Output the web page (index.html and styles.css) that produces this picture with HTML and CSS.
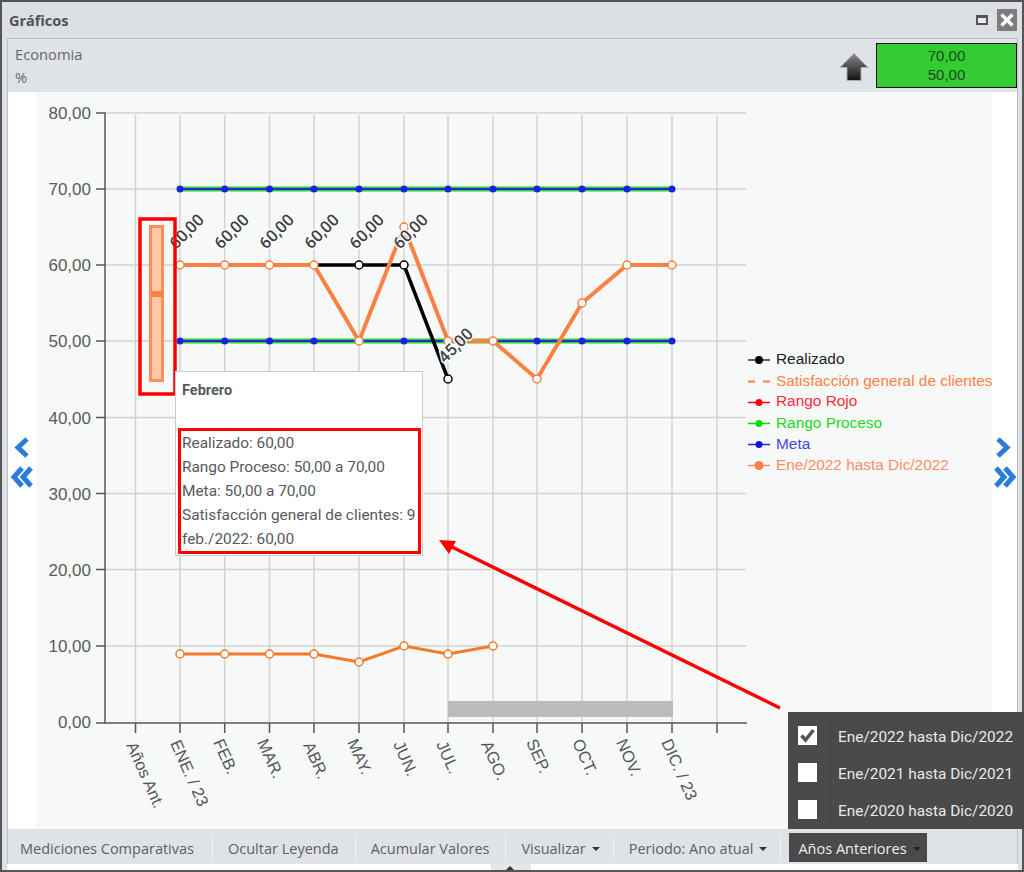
FILE: index.html
```html
<!DOCTYPE html>
<html lang="es">
<head>
<meta charset="utf-8">
<title>Gráficos</title>
<link rel="stylesheet" href="styles.css">
</head>
<body>
<div class="window">
  <header class="titlebar">
    <h1 class="title">Gráficos</h1>
    <div class="win-controls">
      <span class="restore"></span>
      <span class="close"><svg width="20" height="22" viewBox="0 0 20 22"><path d="M4.500 5.500 15.500 16.500M15.500 5.500 4.500 16.500" stroke="#fff" stroke-width="3.400" fill="none"/></svg></span>
    </div>
  </header>
  <section class="panel">
    <div class="panel-head">
      <div class="indicator"><div>Economia</div><div>%</div></div>
      <div class="status">
        <svg class="up-arrow" width="30" height="30" viewBox="0 0 30 30">
          <defs><linearGradient id="ua" x1="0" y1="0" x2="0" y2="1"><stop offset="0" stop-color="#8a8a8a"/><stop offset="1" stop-color="#111"/></linearGradient></defs>
          <path d="M15 1.500 29 15.500H22V28.500H8V15.500H1Z" fill="url(#ua)" stroke="#aaa" stroke-width="1"/>
        </svg>
        <div class="range"><div>70,00</div><div>50,00</div></div>
      </div>
    </div>
    <div class="chart-area">
      <div class="nav nav-left">
        <svg width="28" height="60" viewBox="0 0 28 60">
          <path class="chev" d="M19 6 10 14.500 19 23"/>
          <path class="chev" d="M14 35 6 44 14 53M23 35 15 44 23 53"/>
        </svg>
      </div>
      <div class="plot">
        <svg class="chart" width="956" height="737" viewBox="36 92 956 737">
          <g class="grid">
            <path d="M105 113H746M105 189H746M105 265H746M105 341H746M105 417.500H746M105 493.500H746M105 569.500H746M105 646H746"/>
            <path d="M135.500 115V722M180 115V722M224.700 115V722M269.500 115V722M314 115V722M359 115V722M404 115V722M448 115V722M493 115V722M537 115V722M582 115V722M627 115V722M672 115V722M717 115V722"/>
          </g>
          <g class="axis">
            <path d="M96 113H105V723H747M96 189H105M96 265H105M96 341H105M96 417.500H105M96 493.500H105M96 569.500H105M96 646H105M96 723H105"/>
            <path d="M135.500 723V733M180 723V733M224.700 723V733M269.500 723V733M314 723V733M359 723V733M404 723V733M448 723V733M493 723V733M537 723V733M582 723V733M627 723V733M672 723V733M717 723V733"/>
          </g>
          <g class="ylabels">
            <text x="91" y="119">80,00</text><text x="91" y="195">70,00</text><text x="91" y="271">60,00</text><text x="91" y="347">50,00</text><text x="91" y="424">40,00</text><text x="91" y="500">30,00</text><text x="91" y="576">20,00</text><text x="91" y="652">10,00</text><text x="91" y="728">0,00</text>
          </g>
          <g class="xlabels">
            <text transform="translate(126 745) rotate(66)">Años Ant.</text>
            <text transform="translate(170 743) rotate(66)">ENE. / 23</text>
            <text transform="translate(213 742) rotate(66)">FEB.</text>
            <text transform="translate(257 742) rotate(66)">MAR.</text>
            <text transform="translate(303 745) rotate(66)">ABR.</text>
            <text transform="translate(347 742) rotate(66)">MAY.</text>
            <text transform="translate(393 744) rotate(66)">JUN.</text>
            <text transform="translate(436 744) rotate(66)">JUL.</text>
            <text transform="translate(481 744) rotate(66)">AGO.</text>
            <text transform="translate(526 742) rotate(66)">SEP.</text>
            <text transform="translate(572 742) rotate(66)">OCT.</text>
            <text transform="translate(616 742) rotate(66)">NOV.</text>
            <text transform="translate(661 742) rotate(66)">DIC. / 23</text>
          </g>
          <rect class="gray-bar" x="448" y="701" width="225" height="16"/>
          <path class="band" d="M180 189H672M180 341H672"/>
          <path class="meta" d="M180 189H672M180 341H672"/>
          <g class="meta-dots">
            <circle cx="180" cy="189" r="3.500"/><circle cx="224.700" cy="189" r="3.500"/><circle cx="269.500" cy="189" r="3.500"/><circle cx="314" cy="189" r="3.500"/><circle cx="359" cy="189" r="3.500"/><circle cx="404" cy="189" r="3.500"/><circle cx="448" cy="189" r="3.500"/><circle cx="493" cy="189" r="3.500"/><circle cx="537" cy="189" r="3.500"/><circle cx="582" cy="189" r="3.500"/><circle cx="627" cy="189" r="3.500"/><circle cx="672" cy="189" r="3.500"/>
            <circle cx="180" cy="341" r="3.500"/><circle cx="224.700" cy="341" r="3.500"/><circle cx="269.500" cy="341" r="3.500"/><circle cx="314" cy="341" r="3.500"/><circle cx="359" cy="341" r="3.500"/><circle cx="404" cy="341" r="3.500"/><circle cx="448" cy="341" r="3.500"/><circle cx="493" cy="341" r="3.500"/><circle cx="537" cy="341" r="3.500"/><circle cx="582" cy="341" r="3.500"/><circle cx="627" cy="341" r="3.500"/><circle cx="672" cy="341" r="3.500"/>
          </g>
          <polyline class="real" points="180,265 224.700,265 269.500,265 314,265 359,265 404,265 448,379"/>
          <g class="real-dots">
            <circle cx="359" cy="265" r="4"/><circle cx="404" cy="265" r="4"/><circle cx="448" cy="379" r="4"/>
          </g>
          <polyline class="prev" points="180,265 224.700,265 269.500,265 314,265 359,341 404,227 448,341 493,341 537,379 582,303 627,265 672,265"/>
          <g class="prev-dots">
            <circle cx="180" cy="265" r="4"/><circle cx="224.700" cy="265" r="4"/><circle cx="269.500" cy="265" r="4"/><circle cx="314" cy="265" r="4"/><circle cx="359" cy="341" r="4"/><circle cx="404" cy="227" r="4"/><circle cx="448" cy="341" r="4"/><circle cx="493" cy="341" r="4"/><circle cx="537" cy="379" r="4"/><circle cx="582" cy="303" r="4"/><circle cx="627" cy="265" r="4"/><circle cx="672" cy="265" r="4"/>
          </g>
          <polyline class="sat" points="180,654 224.700,654 269.500,654 314,654 359,662 404,646 448,654 493,646"/>
          <g class="sat-dots">
            <circle cx="180" cy="654" r="4"/><circle cx="224.700" cy="654" r="4"/><circle cx="269.500" cy="654" r="4"/><circle cx="314" cy="654" r="4"/><circle cx="359" cy="662" r="4"/><circle cx="404" cy="646" r="4"/><circle cx="448" cy="654" r="4"/><circle cx="493" cy="646" r="4"/>
          </g>
          <g class="vlabels">
            <text transform="translate(176 250) rotate(-45)">60,00</text>
            <text transform="translate(221 250) rotate(-45)">60,00</text>
            <text transform="translate(266 250) rotate(-45)">60,00</text>
            <text transform="translate(311 250) rotate(-45)">60,00</text>
            <text transform="translate(356 250) rotate(-45)">60,00</text>
            <text transform="translate(400 250) rotate(-45)">60,00</text>
            <text transform="translate(445 364) rotate(-45)">45,00</text>
          </g>
          <g class="box">
            <rect class="box-outer" x="150.500" y="226.500" width="12" height="154"/>
            <rect class="box-median" x="151" y="291" width="12" height="6"/>
          </g>
          <rect class="mark" x="140" y="219" width="35" height="175"/>
          <path class="arrow-line" d="M780 708 452 547"/>
          <path class="arrow-head" d="M439 540 456 541 449 554Z"/>
          <g class="legend">
            <path class="l1" d="M748 360H770"/><circle class="d1" cx="759" cy="360" r="4"/>
            <path class="l2" d="M748 381.500H755M763 381.500H770"/>
            <path class="l3" d="M748 402.500H770"/><circle class="d3" cx="759" cy="402.500" r="3.500"/>
            <path class="l4" d="M748 423.500H770"/><circle class="d4" cx="759" cy="423.500" r="3.500"/>
            <path class="l5" d="M748 444.500H770"/><circle class="d5" cx="759" cy="444.500" r="3.500"/>
            <path class="l6" d="M748 465.500H770"/><circle class="d6" cx="759" cy="465.500" r="4.500"/>
            <text class="t1" x="776" y="364">Realizado</text>
            <text class="t2" x="776" y="386">Satisfacción general de clientes</text>
            <text class="t3" x="776" y="406">Rango Rojo</text>
            <text class="t4" x="776" y="428">Rango Proceso</text>
            <text class="t5" x="776" y="449">Meta</text>
            <text class="t6" x="776" y="470">Ene/2022 hasta Dic/2022</text>
          </g>
        </svg>
        <div class="tooltip">
          <div class="tip-title">Febrero</div>
          <div class="tip-body">
            <div>Realizado: 60,00</div>
            <div>Rango Proceso: 50,00 a 70,00</div>
            <div>Meta: 50,00 a 70,00</div>
            <div>Satisfacción general de clientes: 9</div>
            <div>feb./2022: 60,00</div>
          </div>
        </div>
      </div>
      <div class="nav nav-right">
        <svg width="24" height="60" viewBox="0 0 24 60">
          <path class="chev" d="M6 6 15 14.500 6 23"/>
          <path class="chev" d="M4 35 12 44 4 53M13 35 21 44 13 53"/>
        </svg>
      </div>
    </div>
    <nav class="toolbar">
      <span class="tool">Mediciones Comparativas</span>
      <span class="tool">Ocultar Leyenda</span>
      <span class="tool">Acumular Valores</span>
      <span class="tool caret">Visualizar</span>
      <span class="tool caret">Periodo: Ano atual</span>
      <span class="tool caret active">Años Anteriores</span>
    </nav>
  </section>
  <div class="footer"><span class="grip"></span></div>
  <div class="menu">
    <div class="menu-row">
      <span class="checkbox"><svg width="19" height="19" viewBox="0 0 19 19"><path d="M3.500 9.500 7.500 14 15.500 4" stroke="#555" stroke-width="3.500" fill="none"/></svg></span>
      <span class="menu-label">Ene/2022 hasta Dic/2022</span>
    </div>
    <div class="menu-row"><span class="checkbox"></span><span class="menu-label">Ene/2021 hasta Dic/2021</span></div>
    <div class="menu-row"><span class="checkbox"></span><span class="menu-label">Ene/2020 hasta Dic/2020</span></div>
  </div>
</div>
</body>
</html>
```
FILE: styles.css
```css
* { box-sizing: border-box; }
html, body { margin: 0; padding: 0; }
body { width: 1024px; height: 872px; overflow: hidden; background: #fff; }

.window {
  position: relative;
  width: 1024px;
  height: 872px;
  display: flex;
  flex-direction: column;
  background: #dcdfe4;
  border: 2px solid #555;
  padding: 0 4px 0 5px;
  font-family: "Open Sans", sans-serif;
}
.titlebar {
  height: 36px;
  flex: none;
  display: flex;
  align-items: center;
  justify-content: space-between;
  padding: 0 1px 0 2px;
}
.title { margin: 0; font-size: 14.500px; font-weight: 700; color: #50525a; }
.win-controls { display: flex; align-items: center; gap: 9px; }
.restore { width: 12px; height: 10px; border: 2px solid #555; border-top-width: 3px; background: #e8eaee; }
.close { width: 20px; height: 22px; background: #7d7d7d; display: block; }
.close svg { display: block; }

.panel {
  height: 826px;
  flex: none;
  display: flex;
  flex-direction: column;
  border-left: 1px solid #bcc0c8;
  border-top: 1px solid #bcc0c8;
  border-right: 1px solid #bcc0c8;
  background: #fff;
}
.panel-head {
  height: 53px;
  flex: none;
  display: flex;
  justify-content: space-between;
  background: #dfe2e6;
  padding: 4px 0 0 7px;
}
.indicator { font-size: 14.700px; line-height: 23px; color: #66686e; }
.status { display: flex; gap: 7px; }
.up-arrow { margin-top: 9px; }
.range {
  width: 141px;
  height: 45px;
  background: #33cc33;
  border: 1px solid #111;
  text-align: center;
  font-family: "Liberation Sans", sans-serif;
  font-size: 15px;
  line-height: 19px;
  color: #1c4a1c;
  padding-top: 2px;
}

.chart-area { height: 737px; flex: none; display: flex; background: #fff; }
.nav { flex: none; position: relative; }
.nav svg { position: absolute; top: 341px; left: 0; }
.nav-left { width: 28px; }
.nav-right { width: 24px; }
.chev { fill: none; stroke: #2a7bdc; stroke-width: 5; }
.plot { position: relative; width: 956px; height: 737px; background: #f7f9f9; flex: none; }
.chart { display: block; }

.grid path { fill: none; stroke: #d2d2d2; stroke-width: 1.500; }
.axis path { fill: none; stroke: #555; stroke-width: 1.500; }
.ylabels text { font: 17px "Liberation Sans", sans-serif; fill: #5a5a5a; text-anchor: end; }
.xlabels text { font: 16.500px "Liberation Sans", sans-serif; fill: #555; }
.gray-bar { fill: #bcbcbc; }
.band { fill: none; stroke: #2fce2f; stroke-width: 5; }
.meta { fill: none; stroke: #1f2fd8; stroke-width: 2; }
.meta-dots circle { fill: #1a22e0; }
.real { fill: none; stroke: #000; stroke-width: 3.500; }
.real-dots circle { fill: #fff; stroke: #000; stroke-width: 1.500; }
.prev { fill: none; stroke: #ff8040; stroke-width: 4; }
.prev-dots circle { fill: #fff; stroke: #f58140; stroke-width: 1.500; }
.sat { fill: none; stroke: #f47a2a; stroke-width: 3; }
.sat-dots circle { fill: #fff; stroke: #f47a2a; stroke-width: 1.500; }
.vlabels text {
  font: 500 16.500px "Roboto", sans-serif;
  fill: #3f3f45;
  stroke: #fff;
  stroke-width: 3px;
  paint-order: stroke;
}
.box-outer { fill: #ffc9a8; stroke: #ff8f58; stroke-width: 3; }
.box-median { fill: #ff8040; }
.mark { fill: none; stroke: #f00; stroke-width: 3.500; }
.arrow-line { fill: none; stroke: #f00; stroke-width: 3.500; }
.arrow-head { fill: #f00; }

.legend text { font: 15.400px "Liberation Sans", sans-serif; }
.legend path { fill: none; stroke-width: 1.500; }
.l1 { stroke: #333; } .d1 { fill: #000; } .t1 { fill: #222; }
.l2 { stroke: #ff8040; stroke-width: 2 !important; } .t2 { fill: #ff8040; }
.l3 { stroke: #f00; } .d3 { fill: #f00; } .t3 { fill: #ff2a3a; }
.l4 { stroke: #0d0; } .d4 { fill: #0d0; } .t4 { fill: #22d622; }
.l5 { stroke: #22d; } .d5 { fill: #11d; } .t5 { fill: #4646e0; }
.l6 { stroke: #ff9060; } .d6 { fill: #ff8040; } .t6 { fill: #ff8c64; }

.tooltip {
  position: absolute;
  left: 139px;
  top: 279px;
  width: 248px;
  height: 185px;
  background: #fff;
  border: 1px solid #ccc;
  font-family: "Roboto", sans-serif;
  font-size: 15.400px;
  color: #555a60;
}
.tip-title { font-weight: 700; font-size: 14.500px; line-height: 20px; padding: 9px 0 0 6px; }
.tip-body {
  position: absolute;
  left: 2px;
  top: 56px;
  width: 243px;
  height: 126px;
  border: 3px solid #f00;
  padding: 0 0 0 1px;
  line-height: 24px;
  white-space: nowrap;
}

.toolbar {
  height: 35px;
  flex: none;
  display: flex;
  align-items: center;
  background: #dfe2e6;
  font-size: 14.500px;
  color: #5d5f66;
  padding-top: 2px;
}
.tool { display: flex; align-items: center; height: 22px; padding: 2px 16px 0 15px; border-right: 1px solid #f3f4f6; white-space: nowrap; }
.tool:first-child { padding-left: 12px; padding-right: 18px; }
.caret { padding-right: 13px; }
.caret::after {
  content: "";
  margin-left: 6px;
  border: 4px solid transparent;
  border-top-color: #333;
  border-bottom-width: 0;
}
.tool.active {
  height: 29px;
  margin-left: 8px;
  padding: 2px 6px 0 9px;
  background: #4a4a4a;
  color: #eee;
  border-right: 0;
}
.tool.active::after { border-top-color: #222; }
.footer { flex: 1; position: relative; background: #fff; }
.grip {
  position: absolute;
  left: 484px;
  bottom: 0;
  width: 40px;
  height: 6px;
  background: #e4e6ea;
}
.grip::after {
  content: "";
  position: absolute;
  left: 15px;
  bottom: 0;
  border: 4px solid transparent;
  border-bottom-color: #333;
  border-top-width: 0;
}
.menu {
  position: absolute;
  left: 786px;
  top: 710px;
  width: 236px;
  height: 117px;
  background: #4a4a4a;
  display: flex;
  flex-direction: column;
  padding: 5px 0 0 10px;
  color: #e9e9e9;
  font: 400 15.400px "Roboto", sans-serif;
}
.menu::before {
  content: "";
  position: absolute;
  left: 42px;
  top: 4px;
  bottom: 0;
  border-left: 1px solid #404040;
}
.menu-row { height: 37px; display: flex; align-items: center; gap: 21px; }
.checkbox { width: 19px; height: 19px; background: #fff; display: block; flex: none; }
.checkbox svg { display: block; }
.menu-label { white-space: nowrap; padding-top: 2px; }
```
